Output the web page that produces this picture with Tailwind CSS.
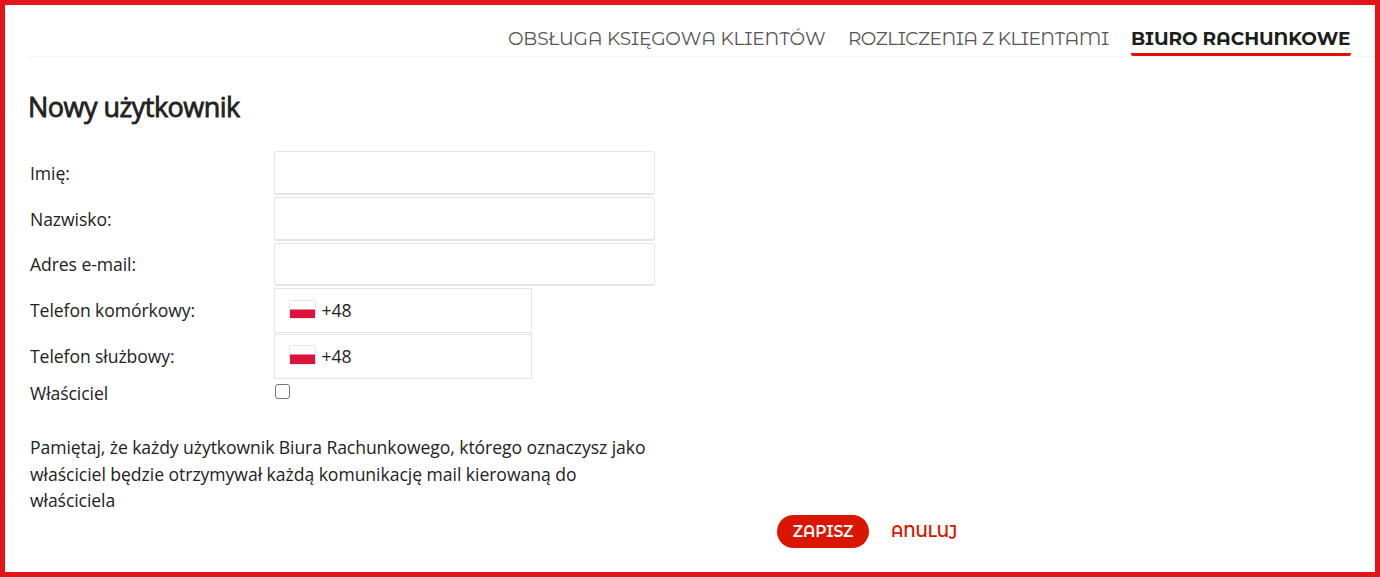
<!DOCTYPE html>
<html lang="pl">
<head>
  <meta charset="UTF-8" />
  <meta name="viewport" content="width=device-width, initial-scale=1.0"/>
  <title>Nowy użytkownik</title>
  <script src="https://cdn.jsdelivr.net/npm/@tailwindcss/browser@4"></script>
</head>
<body class="bg-white">
  <div class="h-[577px] border-[5px] border-[#e2151b] pl-[23px] font-['Open_Sans',sans-serif] text-[17.6px] tracking-[-0.085px] text-[#222] overflow-hidden">

    <!-- Top navigation -->
    <nav class="flex h-[52px] justify-end gap-[22px] border-b border-[#f2f2f2] pr-6 pt-[22px] font-['Montserrat_Alternates',Inter,sans-serif] text-[18.5px] leading-6 whitespace-nowrap text-[#555]">
      <a href="#" class="alt w-[318px] tracking-[-0.16px]">OBSŁUGA KSIĘGOWA KLIENTÓW</a>
      <a href="#" class="alt w-[261px] tracking-[-0.54px]">ROZLICZENIA Z KLIENTAMI</a>
      <a href="#" class="alt h-[29px] w-[220px] rounded-xs border-b-3 border-[#da1600] font-bold tracking-[-0.1px] text-[#1d1d1b]">BIURO RACHUNKOWE</a>
    </nav>

    <h1 class="mt-[31px] text-[27px] leading-[38px] font-normal tracking-[-0.5px] [-webkit-text-stroke:0.8px_#222]">Nowy użytkownik</h1>

    <form class="mt-[25px]">
      <div class="grid w-[627px] grid-cols-[244px_1fr] grid-rows-[46px_46px_45px_46px_46px_24px] pl-0.5">
        <label for="name" class="pt-[9px]">Imię:</label>
        <input id="name" type="text" class="h-11 rounded-[3px] border border-b-2 border-[#e4e4e4] px-3" />

        <label for="surname" class="pt-[9px]">Nazwisko:</label>
        <input id="surname" type="text" class="h-11 rounded-[3px] border border-b-2 border-[#e4e4e4] px-3" />

        <label for="email" class="pt-2">Adres e-mail:</label>
        <input id="email" type="email" class="h-[43px] rounded-[3px] border border-b-2 border-[#e4e4e4] px-3" />

        <label class="pt-[9px]">Telefon komórkowy:</label>
        <div class="flex h-[45px] w-[258px] items-center gap-[5.5px] border border-[#e4e4e4] pl-3.5">
          <svg class="mb-0.5" width="27" height="19" viewBox="0 0 27 19">
            <rect x=".5" y=".5" width="26" height="18" rx="1" fill="#fff" stroke="#e6e6e6"/>
            <path d="M1 9h25v9H1z" fill="#dc143c"/>
            <path d="M1 9h25v1H1z" fill="#e8899b"/>
          </svg>
          <span>+48</span>
        </div>

        <label class="pt-[9px]">Telefon służbowy:</label>
        <div class="flex h-[45px] w-[258px] items-center gap-[5.5px] border border-[#e4e4e4] pl-3.5">
          <svg class="mb-[3px]" width="27" height="20" viewBox="0 0 27 20">
            <rect x=".5" y=".5" width="26" height="19" rx="1" fill="#fff" stroke="#e6e6e6"/>
            <path d="M1 9h25v10H1z" fill="#dc143c"/>
            <path d="M1 9h25v1H1z" fill="#e8899b"/>
          </svg>
          <span>+48</span>
        </div>

        <label for="owner">Właściciel</label>
        <input id="owner" type="checkbox" class="mt-1 ml-px h-[15px] w-[15px] appearance-none justify-self-start rounded-[3px] border border-[#767676]" />
      </div>

      <p class="mt-[30px] pl-0.5 leading-[26.5px] whitespace-nowrap">Pamiętaj, że każdy użytkownik Biura Rachunkowego, którego oznaczysz jako<br><span class="tracking-[-0.05px]">właściciel będzie otrzymywał każdą komunikację mail kierowaną do</span><br>właściciela</p>

      <div class="mt-px flex items-center gap-[22px] pl-[749px] font-['Montserrat_Alternates',Inter,sans-serif] text-[15.5px] font-semibold">
        <button type="submit" class="alt h-[33px] w-[92px] rounded-full bg-[#da1600] pt-px text-white">ZAPISZ</button>
        <button type="button" class="alt pt-px text-[#da1600]">ANULUJ</button>
      </div>
    </form>
  </div>

  <script>
    document.querySelectorAll(".alt").forEach(el => {
      el.innerHTML = el.textContent.replace(/[EĘWZ]/g, `<span class="font-['Montserrat',sans-serif]">$&</span>`);
    });
  </script>
</body>
</html>
